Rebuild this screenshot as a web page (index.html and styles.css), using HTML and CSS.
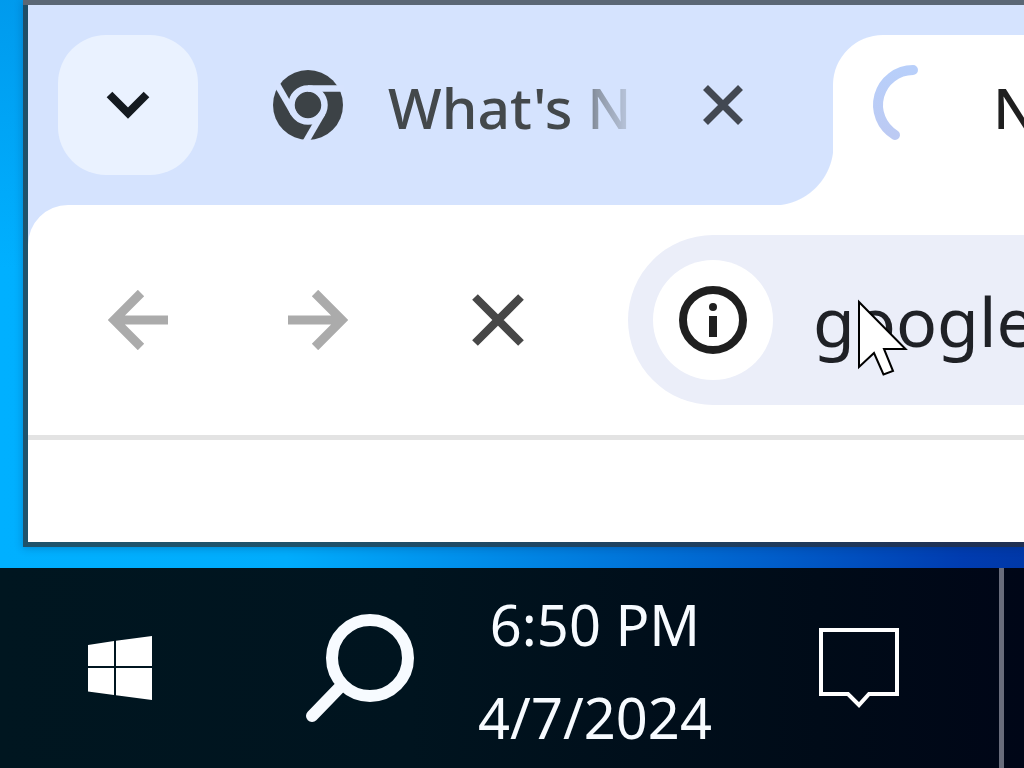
FILE: index.html
```html
<!DOCTYPE html>
<html lang="en">
<head>
<meta charset="utf-8">
<meta name="viewport" content="width=device-width, initial-scale=1">
<title>New Tab</title>
<link rel="stylesheet" href="styles.css">
</head>
<body class="desktop">
<main class="window">
  <div class="tab-strip">
    <button class="tab-search" type="button" aria-label="Search tabs">
      <svg width="44" height="28" viewBox="0 0 44 28" fill="none" stroke="#141a20" stroke-width="8"><path d="M3.500 3.500L22 22L40.500 3.500"/></svg>
    </button>
    <div class="tab">
      <svg class="favicon" viewBox="-35 -35 70 70" aria-hidden="true">
        <circle r="35" fill="#3c4246"/>
        <circle r="16.500" fill="none" stroke="#d6e3fe" stroke-width="6.500"/>
        <g stroke="#d6e3fe" stroke-width="6.500">
          <path d="M0-16.500H36"/>
          <path d="M0-16.500H36" transform="rotate(120)"/>
          <path d="M0-16.500H36" transform="rotate(240)"/>
        </g>
      </svg>
      <span class="tab-title fading">What's N</span>
      <button class="icon-button" type="button" aria-label="Close tab">
        <svg width="40" height="40" viewBox="0 0 40 40" fill="none" stroke="#424852" stroke-width="7"><path d="M2.500 2.500L37.500 37.500M37.500 2.500L2.500 37.500"/></svg>
      </button>
    </div>
    <div class="tab active">
      <svg class="favicon" viewBox="-35 -35 70 70" fill="none" stroke="url(#spin)" stroke-width="10" stroke-linecap="round" role="img" aria-label="Loading">
        <defs><linearGradient id="spin" x1="0" y1="0" x2="0" y2="1"><stop offset="0" stop-color="#b8cffa"/><stop offset="1" stop-color="#bccaf3"/></linearGradient></defs>
        <path d="M0-35A35 35 0 0 0-18 30"/>
      </svg>
      <span class="tab-title">New Tab</span>
    </div>
  </div>
  <div class="toolbar-wrap">
    <div class="toolbar">
      <button class="icon-button" type="button" aria-label="Back">
        <svg width="60" height="60" viewBox="0 0 60 60" fill="none" stroke="#ababab" stroke-width="9"><path d="M33 3L6 30L33 57M7 30H60"/></svg>
      </button>
      <button class="icon-button" type="button" aria-label="Forward">
        <svg width="60" height="60" viewBox="0 0 60 60" fill="none" stroke="#ababab" stroke-width="9"><path d="M27 3L54 30L27 57M53 30H0"/></svg>
      </button>
      <button class="icon-button" type="button" aria-label="Stop loading">
        <svg width="60" height="60" viewBox="0 0 60 60" fill="none" stroke="#474747" stroke-width="8"><path d="M7 7L53 53M53 7L7 53"/></svg>
      </button>
      <div class="address-bar">
        <button class="site-info" type="button" aria-label="View site information">
          <svg width="68" height="68" viewBox="0 0 68 68"><circle cx="34" cy="34" r="30" fill="none" stroke="#1f1f1f" stroke-width="8"/><circle cx="34" cy="21" r="4" fill="#1f1f1f"/><path d="M30 30H38V51H30Z" fill="#1f1f1f"/></svg>
        </button>
        <input class="address" type="text" value="google" aria-label="Address" spellcheck="false">
        <svg class="pointer" width="52" height="78" viewBox="-2 -4 52 78" fill="#fff" stroke="#000" stroke-width="2" aria-hidden="true"><path d="M0 0V65L15 51L24.500 72.500L34 69L25 47H46.500Z"/></svg>
      </div>
    </div>
  </div>
  <div class="page"></div>
</main>
<footer class="taskbar">
  <button class="icon-button" type="button" aria-label="Start">
    <svg width="64" height="64" viewBox="0 0 64 64" fill="#fff"><path d="M0 9L26 5V30H0ZM28 4.700L64 0V30H28ZM0 32H26V59L0 55.500ZM28 32H64V64L28 59.300Z"/></svg>
  </button>
  <button class="icon-button search" type="button" aria-label="Search">
    <svg width="110" height="108" viewBox="0 0 110 108" fill="none" stroke="#f7fbff" stroke-width="12"><circle cx="65" cy="44" r="38"/><path d="M37 71L7 102" stroke-linecap="round"/></svg>
  </button>
  <div class="clock">
    <time class="clock-line">6:50 PM</time>
    <time class="clock-line" datetime="2024-04-07">4/7/2024</time>
  </div>
  <button class="icon-button" type="button" aria-label="Notifications">
    <svg width="80" height="80" viewBox="0 0 80 80" fill="none" stroke="#fff" stroke-width="4"><path d="M2 2H78V66H50L40 77L29 66H2Z"/></svg>
  </button>
  <button class="show-desktop" type="button" aria-label="Show desktop"></button>
</footer>
</body>
</html>
```

FILE: styles.css
```css
* { box-sizing: border-box; }
button, input { font: inherit; color: inherit; border: 0; padding: 0; margin: 0; background: none; }
svg { display: block; }

.desktop {
  margin: 0;
  min-height: 100vh;
  display: flex;
  flex-direction: column;
  overflow: hidden;
  font-family: "Noto Sans", "Open Sans", sans-serif;
  font-size: 57px;
  background:
    linear-gradient(to bottom, rgba(0, 140, 225, 0.6), rgba(0, 140, 225, 0) 35%),
    linear-gradient(to right, #00b0ff 0%, #00acfc 28%, #008eea 46%, #0060cc 74%, #003cb0 94%, #0038a8 100%);
}

.window {
  flex: 1;
  display: flex;
  flex-direction: column;
  margin: 0 0 21px 23px;
  padding: 0 0 5px 5px;
  border-top: 5px solid #5b6775;
  background: rgba(44, 44, 44, 0.7);
  box-shadow: 0 1px 8px rgba(0, 40, 90, 0.3);
}

.tab-strip {
  display: flex;
  padding: 30px 0 0 30px;
  background: #d5e3fe;
}
.tab-search {
  flex: none;
  display: grid;
  place-items: center;
  width: 140px;
  height: 140px;
  border-radius: 48px;
  background: #eaf2ff;
}
.tab {
  flex: none;
  display: flex;
  align-items: center;
  height: 140px;
  padding: 0 90px 0 75px;
  color: #43484b;
}
.favicon {
  flex: none;
  width: 70px;
  height: 70px;
  overflow: visible;
}
.tab-title {
  margin-left: 45px;
  padding-top: 4px;
  font-weight: 500;
  line-height: 80px;
  white-space: nowrap;
  overflow: hidden;
}
.fading {
  width: 260px;
  margin-right: 55px;
  -webkit-mask-image: linear-gradient(to right, #000 71%, rgba(0, 0, 0, 0.5) 80%, transparent);
  mask-image: linear-gradient(to right, #000 71%, rgba(0, 0, 0, 0.5) 80%, transparent);
}
.icon-button { flex: none; }

.active {
  position: relative;
  flex: 1;
  min-width: 0;
  height: 170px;
  padding: 0 0 30px 45px;
  border-top-left-radius: 50px;
  background: #fff;
  color: #1f1f1f;
}
.active::before {
  content: "";
  position: absolute;
  right: 100%;
  bottom: 0;
  width: 60px;
  height: 60px;
  background: radial-gradient(circle at 0 0, transparent 60px, #fff 61px);
}

.toolbar-wrap { background: #d5e3fe; }
.toolbar {
  display: flex;
  align-items: center;
  gap: 120px;
  padding: 30px 0 30px 80px;
  border-bottom: 5px solid #e3e3e3;
  border-top-left-radius: 40px;
  background: #fff;
}
.address-bar {
  position: relative;
  flex: 1;
  min-width: 0;
  display: flex;
  align-items: center;
  gap: 40px;
  height: 170px;
  margin-left: -20px;
  padding-left: 25px;
  border-radius: 85px 0 0 85px;
  background: #ebeef9;
}
.site-info {
  flex: none;
  display: grid;
  place-items: center;
  width: 120px;
  height: 120px;
  border-radius: 50%;
  background: #fff;
}
.address {
  flex: 1;
  min-width: 0;
  height: 120px;
  outline: 0;
  font-size: 68px;
  color: #1f2126;
}
.pointer {
  position: absolute;
  left: 229px;
  top: 63px;
}

.page { flex: 1; background: #fff; }

.taskbar {
  display: flex;
  align-items: center;
  height: 200px;
  padding-left: 88px;
  background: linear-gradient(to right, #001620, #00141f 40%, #000b18 80%, #000617);
  color: #f7fbff;
}
.search { margin-left: 153px; }
.clock {
  flex: none;
  width: 232px;
  margin: 0 108px 0 64px;
  padding-top: 6px;
  overflow: hidden;
  font-size: 56px;
}
.clock-line {
  display: flex;
  justify-content: center;
  line-height: 93px;
  white-space: nowrap;
}
.show-desktop {
  align-self: stretch;
  width: 25px;
  margin-left: auto;
  border-left: 5px solid #686c7b;
}
```
